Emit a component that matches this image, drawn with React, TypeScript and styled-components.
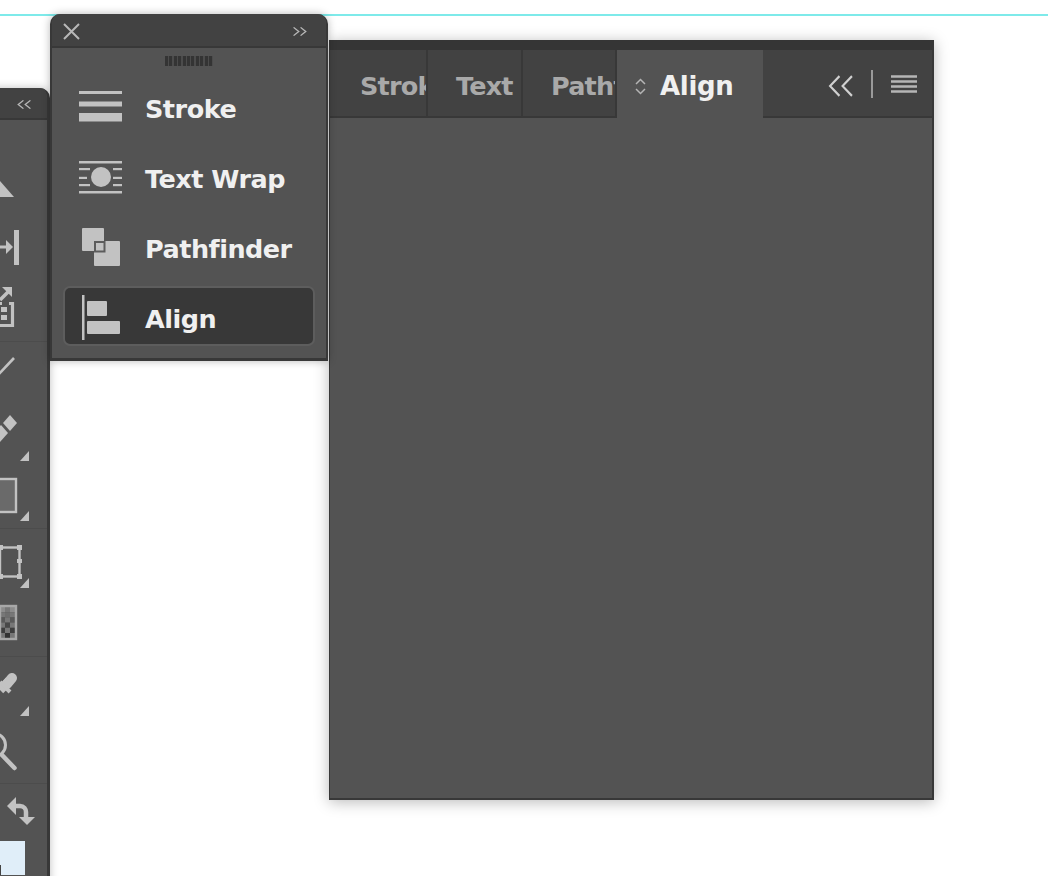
import styled, { createGlobalStyle } from "styled-components";

const GlobalStyle = createGlobalStyle`
  html, body {
    margin: 0;
    padding: 0;
    background: #fff;
  }
`;

const ICON = "#c2c2c2";
const PANEL = "#535353";
const HEADER = "#424242";
const EDGE = "#383838";

const Desktop = styled.div`
  position: relative;
  width: 1048px;
  height: 876px;
  overflow: hidden;
  background: #fff;
  font-family: "DejaVu Sans", "Noto Sans", sans-serif;
`;

const Guide = styled.div`
  position: absolute;
  left: 0;
  right: 0;
  top: 14px;
  height: 2px;
  background: #7eeaea;
`;

/* left tool strip, cut off by the screen edge */
const ToolStrip = styled.aside`
  position: absolute;
  left: -10px;
  top: 88px;
  width: 60px;
  height: 800px;
  box-sizing: border-box;
  border-right: 3px solid ${EDGE};
  border-radius: 0 10px 0 0;
  background: ${PANEL};
  box-shadow: 0 0 8px rgba(0, 0, 0, 0.25);
  overflow: hidden;
`;

const StripHeader = styled.div`
  height: 32px;
  box-sizing: border-box;
  border-bottom: 2px solid ${EDGE};
  background: ${HEADER};
  display: flex;
  align-items: center;
  justify-content: flex-end;
  padding: 2px 16px 0 0;
`;

const ToolGroup = styled.div`
  padding-left: 10px;
  & + & {
    border-top: 1px solid #4c4c4c;
  }
`;

const ToolSvg = styled.svg`
  display: block;
  width: 50px;
`;

const Swatch = styled.div`
  position: relative;
  margin-left: 10px;
  width: 25px;
  height: 34px;
  background: #e0eef9;
  &::after {
    content: "";
    position: absolute;
    left: 0;
    bottom: 0;
    width: 1px;
    height: 10px;
    background: #444;
  }
`;

/* floating menu of collapsed panels */
const FloatPanel = styled.section`
  position: absolute;
  left: 50px;
  top: 14px;
  width: 278px;
  height: 347px;
  box-sizing: border-box;
  border-left: 2px solid ${EDGE};
  border-right: 2px solid ${EDGE};
  border-bottom: 3px solid ${EDGE};
  border-radius: 10px 10px 0 0;
  background: ${PANEL};
  box-shadow: 0 0 8px rgba(0, 0, 0, 0.28);
  display: flex;
  flex-direction: column;
  overflow: hidden;
  z-index: 2;
`;

const FloatHeader = styled.div`
  height: 34px;
  flex: none;
  box-sizing: border-box;
  border-bottom: 2px solid ${EDGE};
  background: ${HEADER};
  display: flex;
  align-items: center;
  justify-content: space-between;
  padding: 2px 21px 0 13px;
  margin: 0 -2px;
`;

const Gripper = styled.div`
  flex: none;
  align-self: center;
  width: 48px;
  height: 10px;
  margin: 8px 0 10px;
  background: repeating-linear-gradient(90deg, #343434 0 3px, #4c4c4c 3px 4.4px);
`;

const MenuList = styled.div`
  display: flex;
  flex-direction: column;
  gap: 10px;
  padding: 0 11px;
`;

const MenuRow = styled.div<{ $selected?: boolean }>`
  height: 60px;
  box-sizing: border-box;
  display: flex;
  align-items: center;
  gap: 10px;
  padding-left: 10px;
  border: 2px solid ${(p) => (p.$selected ? "#5d5d5d" : "transparent")};
  border-radius: 7px;
  background: ${(p) => (p.$selected ? "#383838" : "transparent")};
`;

const MenuIcon = styled.svg`
  flex: none;
  display: block;
  width: 60px;
  height: 56px;
`;

const MenuLabel = styled.span`
  padding-top: 7px;
  font-size: 25.5px;
  font-weight: 700;
  letter-spacing: -0.5px;
  line-height: 1;
  color: #f0f0f0;
  white-space: nowrap;
`;

/* docked panel with tabs */
const MainPanel = styled.section`
  position: absolute;
  left: 329px;
  top: 40px;
  width: 605px;
  height: 760px;
  box-sizing: border-box;
  border-left: 1px solid ${EDGE};
  border-right: 2px solid ${EDGE};
  border-bottom: 2px solid ${EDGE};
  border-top: 10px solid #353535;
  background: ${PANEL};
  box-shadow: 0 2px 14px rgba(0, 0, 0, 0.28);
`;

const TabBar = styled.div`
  height: 68px;
  display: flex;
`;

const Tab = styled.div<{ $width: number; $pad: number }>`
  flex: none;
  width: ${(p) => p.$width}px;
  box-sizing: border-box;
  padding: 5px 0 0 ${(p) => p.$pad}px;
  border-right: 2px solid ${EDGE};
  border-bottom: 2px solid ${EDGE};
  background: ${HEADER};
  display: flex;
  align-items: center;
  overflow: hidden;
  font-size: 25.5px;
  font-weight: 700;
  letter-spacing: -0.8px;
  color: #a9a9a9;
  white-space: nowrap;
`;

const ActiveTab = styled.div`
  flex: none;
  width: 146px;
  box-sizing: border-box;
  padding: 4px 0 0 18px;
  background: ${PANEL};
  display: flex;
  align-items: center;
  gap: 14px;
  font-size: 26px;
  font-weight: 700;
  letter-spacing: -0.3px;
  color: #f0f0f0;
`;

const TabControls = styled.div`
  flex: 1;
  box-sizing: border-box;
  border-bottom: 2px solid ${EDGE};
  background: ${HEADER};
  display: flex;
  align-items: center;
  justify-content: flex-end;
  gap: 18px;
  padding: 2px 15px 0 0;
`;

const Divider = styled.div`
  width: 2px;
  height: 28px;
  background: #9a9a9a;
`;

const Checker = () => {
  const shades = ["#8c8c8c", "#6e6e6e", "#5a5a5a", "#484848", "#3e3e3e", "#333"];
  const cells = [];
  for (let row = 0; row < 6; row++) {
    for (let col = 0; col < 3; col++) {
      const light = (row + col) % 2 === 0;
      cells.push(
        <rect
          key={`${row}-${col}`}
          x={col * 5}
          y={607 + row * 5.2}
          width={5}
          height={5.2}
          fill={light ? shades[Math.min(row, 5)] : "#777"}
        />,
      );
    }
  }
  return <>{cells}</>;
};

const Corner = ({ x, y }: { x: number; y: number }) => (
  <polygon points={`${x},${y} ${x},${y + 10} ${x - 9},${y + 10}`} fill={ICON} />
);

const Tool = ({ top, height, children }: { top: number; height: number; children: React.ReactNode }) => (
  <ToolSvg viewBox={`0 ${top} 50 ${height}`} style={{ height }}>
    {children}
  </ToolSvg>
);

const toolGroups = [
  [
    {
      top: 120,
      height: 98,
      art: <polygon points="0,181 14,197 0,197" fill={ICON} />,
    },
    {
      top: 218,
      height: 60,
      art: (
        <>
          <rect x={14} y={230} width={5} height={35} fill={ICON} />
          <path d="M0 247H9" fill="none" stroke={ICON} strokeWidth={3} />
          <polygon points="6,240 13,247 6,254" fill={ICON} />
        </>
      ),
    },
    {
      top: 278,
      height: 63,
      art: (
        <>
          <path d="M0 303.5H2M9 303.5H12.5V325.5H0" fill="none" stroke={ICON} strokeWidth={3.2} />
          <path d="M0 300L9 291" fill="none" stroke={ICON} strokeWidth={3.5} />
          <polygon points="2,287 12,287 12,297" fill={ICON} />
          <rect x={1} y={307} width={6} height={5} fill={ICON} />
          <rect x={1} y={315} width={6} height={5} fill={ICON} />
        </>
      ),
    },
  ],
  [
    {
      top: 342,
      height: 56,
      art: <line x1={-1} y1={374} x2={14} y2={358} stroke={ICON} strokeWidth={2.6} />,
    },
    {
      top: 398,
      height: 64,
      art: (
        <>
          <polygon points="10,415 17,423 10,431 3,423" fill={ICON} />
          <polygon points="1,425 8,433 0,442 0,426" fill={ICON} />
          <Corner x={29} y={451} />
        </>
      ),
    },
    {
      top: 462,
      height: 66,
      art: (
        <>
          <rect x={-4} y={479} width={20} height={33} fill="#6a6a6a" stroke={ICON} strokeWidth={2.4} />
          <Corner x={29} y={511} />
        </>
      ),
    },
  ],
  [
    {
      top: 529,
      height: 63,
      art: (
        <>
          <rect x={0} y={547.5} width={19.5} height={29} fill="none" stroke={ICON} strokeWidth={2.4} />
          <rect x={17} y={545} width={5} height={5} fill={ICON} />
          <rect x={17} y={559} width={5} height={4} fill={ICON} />
          <rect x={17} y={574} width={5} height={5} fill={ICON} />
          <rect x={0} y={545} width={3} height={5} fill={ICON} />
          <rect x={0} y={574} width={3} height={5} fill={ICON} />
          <Corner x={29} y={578} />
        </>
      ),
    },
    {
      top: 592,
      height: 64,
      art: (
        <>
          <Checker />
          <rect x={0} y={606} width={16} height={33} fill="none" stroke="#a8a8a8" strokeWidth={2.4} />
        </>
      ),
    },
  ],
  [
    {
      top: 657,
      height: 61,
      art: (
        <>
          <path d="M0 690L9 681" stroke={ICON} strokeWidth={9} fill="none" />
          <path d="M7 684L12 678" stroke={ICON} strokeWidth={10} strokeLinecap="round" fill="none" />
          <path d="M0 682L10 692" stroke={ICON} strokeWidth={4} fill="none" />
          <Corner x={29} y={706} />
        </>
      ),
    },
    {
      top: 718,
      height: 65,
      art: (
        <>
          <circle cx={-6} cy={745} r={11.5} fill="none" stroke={ICON} strokeWidth={3} />
          <line x1={2} y1={755} x2={14.5} y2={768} stroke={ICON} strokeWidth={4.5} strokeLinecap="round" />
        </>
      ),
    },
  ],
  [
    {
      top: 784,
      height: 57,
      art: (
        <>
          <path d="M12 806H20C24 806 26 809 26 812V819" fill="none" stroke={ICON} strokeWidth={4.5} />
          <polygon points="7,806 16,797 16,815" fill={ICON} />
          <polygon points="19,817 35,817 27,825" fill={ICON} />
        </>
      ),
    },
  ],
];

const DoubleChevron = ({
  dir,
  width,
  height,
  color,
  sw,
  offset = 0,
}: {
  dir: "left" | "right";
  width: number;
  height: number;
  color: string;
  sw: number;
  offset?: number;
}) => (
  <svg
    width={width}
    height={height}
    viewBox="0 0 24 20"
    style={{ display: "block", marginTop: offset }}
    preserveAspectRatio="none"
  >
    <g transform={dir === "right" ? "matrix(-1 0 0 1 24 0)" : undefined} fill="none" stroke={color} strokeWidth={sw}>
      <path d="M11 1L2 10L11 19" />
      <path d="M23 1L14 10L23 19" />
    </g>
  </svg>
);

const menuItems = [
  {
    label: "Stroke",
    top: 76,
    art: (
      <>
        <rect x={79} y={91} width={43} height={3} />
        <rect x={79} y={101.5} width={43} height={5} />
        <rect x={79} y={113} width={43} height={8.5} />
      </>
    ),
  },
  {
    label: "Text Wrap",
    top: 146,
    art: (
      <>
        <rect x={79} y={161} width={43} height={2.5} />
        <rect x={79} y={191} width={43} height={2.5} />
        <circle cx={101} cy={177} r={10} />
        <rect x={79} y={168} width={11} height={2.2} />
        <rect x={79} y={176.8} width={8} height={2.2} />
        <rect x={79} y={184} width={11} height={2.2} />
        <rect x={113} y={168} width={9} height={2.2} />
        <rect x={113} y={176.8} width={9} height={2.2} />
        <rect x={113} y={184} width={9} height={2.2} />
      </>
    ),
  },
  {
    label: "Pathfinder",
    top: 216,
    art: (
      <>
        <rect x={82} y={228} width={22} height={23} rx={1} />
        <rect x={94} y={241} width={26} height={25} rx={1} />
        <rect x={95} y={242} width={9.5} height={9.5} fill="none" stroke="#5c5c5c" strokeWidth={2} />
      </>
    ),
  },
  {
    label: "Align",
    top: 286,
    selected: true,
    art: (
      <>
        <rect x={82} y={295} width={2.5} height={45} />
        <rect x={87} y={301} width={20} height={15} rx={1} />
        <rect x={87} y={321} width={33} height={13} rx={1} />
      </>
    ),
  },
];

const tabs = [
  { label: "Stroke", width: 98, pad: 30 },
  { label: "Text Wrap", width: 95, pad: 28 },
  { label: "Pathfinder", width: 94, pad: 28 },
];

export default function App() {
  return (
    <Desktop>
      <GlobalStyle />
      <Guide />

      <ToolStrip>
        <StripHeader>
          <DoubleChevron dir="left" width={14} height={9} color="#b8b8b8" sw={2.4} />
        </StripHeader>
        {toolGroups.map((group, i) => (
          <ToolGroup key={i}>
            {group.map((tool) => (
              <Tool key={tool.top} top={tool.top} height={tool.height}>
                {tool.art}
              </Tool>
            ))}
          </ToolGroup>
        ))}
        <Swatch />
      </ToolStrip>

      <FloatPanel>
        <FloatHeader>
          <svg width={17} height={17} viewBox="0 0 17 17" style={{ display: "block" }}>
            <path d="M1 1L16 16M16 1L1 16" stroke="#b8b8b8" strokeWidth={2} fill="none" />
          </svg>
          <DoubleChevron dir="right" width={14} height={9} color="#b8b8b8" sw={2.4} />
        </FloatHeader>
        <Gripper />
        <MenuList>
          {menuItems.map((item) => (
            <MenuRow key={item.label} $selected={item.selected}>
              <MenuIcon viewBox={`75 ${item.top + 2} 60 56`} fill={ICON}>
                {item.art}
              </MenuIcon>
              <MenuLabel>{item.label}</MenuLabel>
            </MenuRow>
          ))}
        </MenuList>
      </FloatPanel>

      <MainPanel>
        <TabBar>
          {tabs.map((tab) => (
            <Tab key={tab.label} $width={tab.width} $pad={tab.pad}>
              {tab.label}
            </Tab>
          ))}
          <ActiveTab>
            <svg width={11} height={17} viewBox="0 0 11 17" style={{ display: "block" }}>
              <path d="M1 6L5.5 1.5L10 6M1 11L5.5 15.5L10 11" fill="none" stroke="#b5b5b5" strokeWidth={1.5} />
            </svg>
            Align
          </ActiveTab>
          <TabControls>
            <DoubleChevron dir="left" width={25} height={22} color="#d0d0d0" sw={2} offset={3} />
            <Divider />
            <svg width={26} height={18} viewBox="0 0 26 18" style={{ display: "block" }}>
              <path d="M0 1.5H26M0 6.5H26M0 11.5H26M0 16.5H26" stroke="#b5b5b5" strokeWidth={2.4} fill="none" />
            </svg>
          </TabControls>
        </TabBar>
      </MainPanel>
    </Desktop>
  );
}
